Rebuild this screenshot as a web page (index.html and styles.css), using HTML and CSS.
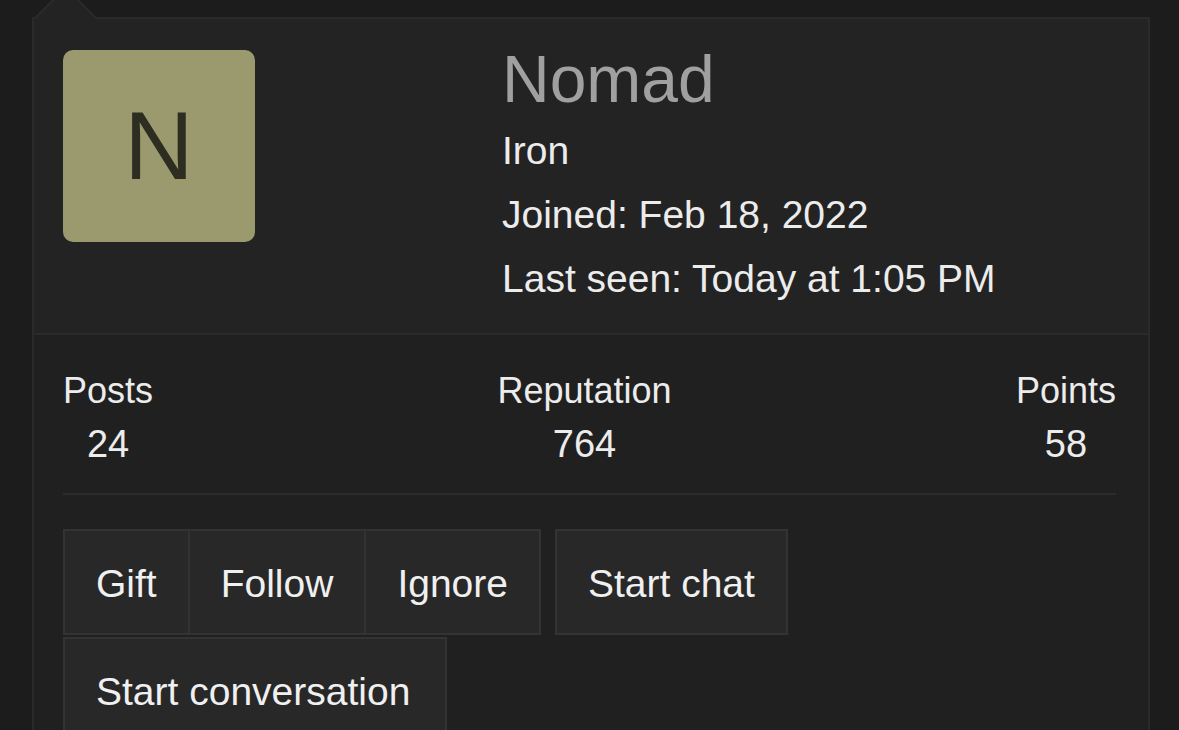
FILE: index.html
```html
<!DOCTYPE html>
<html lang="en">
<head>
    <meta charset="UTF-8">
    <meta name="viewport" content="width=device-width, initial-scale=1.0">
    <title>Member Tooltip</title>
    <link rel="stylesheet" href="styles.css">
</head>
<body>
    <div class="page">
        <div class="tooltip">
            <span class="tooltip-arrow"></span>

            <div class="member-header">
                <div class="avatar">N</div>
                <div class="member-info">
                    <h1 class="member-name">Nomad</h1>
                    <div class="member-line">Iron</div>
                    <div class="member-line">Joined: Feb 18, 2022</div>
                    <div class="member-line">Last seen: Today at 1:05 PM</div>
                </div>
            </div>

            <div class="member-body">
                <div class="stats">
                    <dl class="stat">
                        <dt>Posts</dt>
                        <dd>24</dd>
                    </dl>
                    <dl class="stat">
                        <dt>Reputation</dt>
                        <dd>764</dd>
                    </dl>
                    <dl class="stat">
                        <dt>Points</dt>
                        <dd>58</dd>
                    </dl>
                </div>

                <div class="actions">
                    <div class="button-group">
                        <a class="button" href="#">Gift</a>
                        <a class="button" href="#">Follow</a>
                        <a class="button" href="#">Ignore</a>
                    </div>
                    <a class="button" href="#">Start chat</a>
                    <a class="button button-wide" href="#">Start conversation</a>
                </div>
            </div>
        </div>
    </div>
</body>
</html>
```

FILE: styles.css
```css
body, html {
    margin: 0;
    padding: 0;
    height: 100%;
    background-color: #1c1c1c;
    font-family: "Liberation Sans", Arial, sans-serif;
    overflow: hidden;
}

.page {
    padding: 17px 0 0 32px;
}

.tooltip {
    position: relative;
    width: 1114px;
    border: 2px solid #2a2a2a;
    border-bottom: none;
    background-color: #202020;
}

/* little notch pointing up at the hovered link */
.tooltip-arrow {
    position: absolute;
    top: -23px;
    left: 8px;
    width: 45px;
    height: 45px;
    background-color: #232323;
    border-top: 2px solid #2a2a2a;
    border-left: 2px solid #2a2a2a;
    transform: rotate(45deg);
}

.member-header {
    position: relative;
    display: flex;
    padding: 31px 30px 0 29px;
    height: 283px;
    background-color: #232323;
    border-bottom: 2px solid #2a2a2a;
}

.avatar {
    width: 192px;
    height: 192px;
    border-radius: 10px;
    background-color: #9a9a6e;
    color: #2d2d22;
    font-size: 96px;
    line-height: 192px;
    text-align: center;
}

.member-info {
    margin-left: 247px;
}

.member-name {
    margin: -11px 0 0 0;
    font-size: 66px;
    font-weight: normal;
    line-height: 80px;
    color: #a0a0a0;
}

.member-line {
    font-size: 39px;
    line-height: 63px;
    color: #ececec;
}

.member-line + .member-line {
    margin-top: 1px;
}

.member-body {
    padding: 0 32px 0 29px;
}

.stats {
    display: flex;
    justify-content: space-between;
    padding: 35px 0 27px;
    border-bottom: 2px solid #2c2c2c;
}

.stat {
    margin: 0;
    text-align: center;
    color: #ececec;
}

.stat dt {
    font-size: 36px;
    line-height: 42px;
}

.stat dd {
    margin: 10px 0 0 0;
    font-size: 38px;
    line-height: 44px;
}

.actions {
    display: flex;
    flex-wrap: wrap;
    column-gap: 14px;
    row-gap: 2px;
    padding-top: 34px;
}

.button-group {
    display: flex;
}

.button {
    display: block;
    height: 102px;
    padding: 0 31px;
    border: 2px solid #333333;
    background-color: #282828;
    color: #f0f0f0;
    font-size: 39px;
    line-height: 106px;
    text-decoration: none;
}

.button-wide {
    padding-right: 35px;
}

.button-group .button + .button {
    border-left: none;
}
```
